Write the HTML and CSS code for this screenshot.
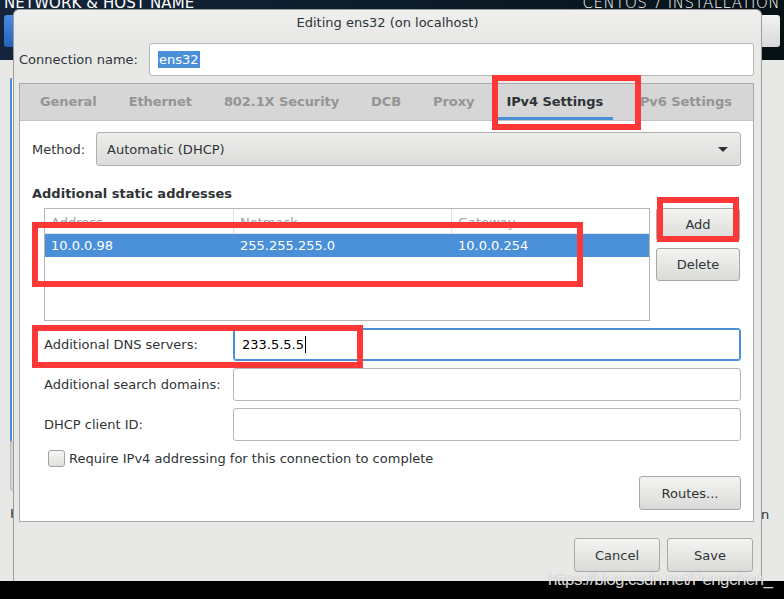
FILE: index.html
```html
<!DOCTYPE html>
<html lang="en">
<head>
    <meta charset="UTF-8">
    <title>Editing ens32 (on localhost)</title>
    <link rel="stylesheet" href="styles.css">
</head>
<body>
    <div class="topbar">
        <div class="hdr hdr-left">
            <div class="hdr-title">NETWORK &amp; HOST NAME</div>
            <div class="done-btn"></div>
        </div>
        <div class="hdr hdr-right">
            <div class="hdr-title light">CENTOS 7 INSTALLATION</div>
            <div class="help-btn"></div>
        </div>
    </div>
    <div class="main">
        <div class="side-panel">
            <div class="side-list"></div>
            <div class="side-scroll"></div>
            <div class="side-h">H</div>
        </div>
        <div class="side-n">n</div>
    </div>
    <div class="bottombar"></div>

    <div class="dialog">
        <div class="titlebar">Editing ens32 (on localhost)</div>
        <div class="dialog-body">
            <div class="conn-row">
                <label class="conn-label">Connection name:</label>
                <div class="entry conn-entry"><span class="sel">ens32</span></div>
            </div>

            <div class="notebook">
                <div class="tabs">
                    <div class="tab">General</div>
                    <div class="tab">Ethernet</div>
                    <div class="tab">802.1X Security</div>
                    <div class="tab">DCB</div>
                    <div class="tab">Proxy</div>
                    <div class="tab active">IPv4 Settings</div>
                    <div class="tab">IPv6 Settings</div>
                </div>
                <div class="page">
                    <div class="method-row">
                        <label class="method-label">Method:</label>
                        <div class="combo">
                            <span>Automatic (DHCP)</span>
                            <span class="arrow"></span>
                        </div>
                    </div>

                    <div class="section-title">Additional static addresses</div>

                    <div class="addr-row">
                        <div class="addr-table">
                            <div class="trow thead">
                                <div class="cell c1">Address</div>
                                <div class="cell c2">Netmask</div>
                                <div class="cell c3">Gateway</div>
                            </div>
                            <div class="trow selected">
                                <div class="cell c1">10.0.0.98</div>
                                <div class="cell c2">255.255.255.0</div>
                                <div class="cell c3">10.0.0.254</div>
                            </div>
                        </div>
                        <div class="addr-buttons">
                            <button class="btn">Add</button>
                            <button class="btn">Delete</button>
                        </div>
                    </div>

                    <div class="form-grid">
                        <label>Additional DNS servers:</label>
                        <div class="entry focus">233.5.5.5<span class="caret"></span></div>
                        <label>Additional search domains:</label>
                        <div class="entry"></div>
                        <label>DHCP client ID:</label>
                        <div class="entry"></div>
                    </div>

                    <div class="check-row">
                        <span class="checkbox"></span>
                        <span>Require IPv4 addressing for this connection to complete</span>
                    </div>

                    <div class="routes-row">
                        <button class="btn routes">Routes...</button>
                    </div>
                </div>
            </div>

            <div class="actions">
                <button class="btn action">Cancel</button>
                <button class="btn action">Save</button>
            </div>
        </div>
    </div>

    <!-- annotation marks drawn over the screenshot -->
    <div class="mark mark-tab"></div>
    <div class="mark mark-row"></div>
    <div class="mark mark-add"></div>
    <div class="mark mark-dns"></div>

    <div class="watermark">https://blog.csdn.net/Pengchen_</div>
</body>
</html>
```

FILE: styles.css
```css
* {
    box-sizing: border-box;
}

body {
    margin: 0;
    width: 784px;
    height: 599px;
    overflow: hidden;
    position: relative;
    display: flex;
    flex-direction: column;
    font-family: 'DejaVu Sans', sans-serif;
    font-size: 13px;
    color: #2e3436;
    background-color: #e8e8e7;
}

/* backdrop: the installer screen behind the dialog */
.topbar {
    height: 60px;
    display: flex;
    justify-content: space-between;
    background: linear-gradient(to right, #14253b, #0b1a26 60%, #061114);
    color: white;
}

.hdr {
    display: flex;
    flex-direction: column;
}

.hdr-left {
    padding-left: 4px;
}

.hdr-right {
    align-items: flex-end;
    padding-right: 4px;
}

.hdr-title {
    font-size: 15px;
    line-height: 15px;
    margin-top: -4px;
    letter-spacing: 0.1px;
}

.hdr-title.light {
    font-weight: 300;
    letter-spacing: 0.5px;
}

.done-btn {
    margin-top: 4px;
    width: 60px;
    height: 32px;
    border-radius: 3px;
    background: linear-gradient(#4a8be0, #2463b8);
}

.help-btn {
    margin-top: 4px;
    width: 60px;
    height: 32px;
    border-radius: 3px;
    background: linear-gradient(#f2f2f2, #d8d8d8);
}

.main {
    flex: 1;
    position: relative;
}

.side-panel {
    position: absolute;
    left: 10px;
    top: 18px;
    width: 10px;
    height: 420px;
}

.side-list {
    height: 370px;
    background: white;
    border-left: 2px solid #4a90d9;
    border-top: 1px solid #bbb;
}

.side-scroll {
    width: 4px;
    height: 50px;
    margin-top: -7px;
    border-radius: 0 0 0 3px;
    background: #d4d4d4;
    border: 1px solid #bbb;
}

.side-h {
    margin-top: 15px;
    font-size: 13px;
}

.side-n {
    position: absolute;
    left: 761px;
    top: 447px;
    font-size: 13px;
}

.bottombar {
    height: 18px;
    background: black;
}

/* dialog window */
.dialog {
    position: absolute;
    left: 13px;
    top: 9px;
    width: 749px;
    height: 572px;
    border: 1px solid #9c9c9c;
    border-bottom: none;
    border-radius: 6px 6px 0 0;
    background: #e8e8e7;
    display: flex;
    flex-direction: column;
}

.titlebar {
    height: 27px;
    line-height: 26px;
    text-align: center;
    border-radius: 6px 6px 0 0;
    background: linear-gradient(#efefee, #e8e8e7);
}

.dialog-body {
    padding: 6px 7px 0 5px;
    flex: 1;
    display: flex;
    flex-direction: column;
}

.conn-row {
    display: flex;
    align-items: center;
    height: 33px;
}

.conn-label {
    width: 130px;
}

.entry {
    height: 32px;
    background: white;
    border: 1px solid #b6b6b3;
    border-radius: 3px;
    display: flex;
    align-items: center;
    padding-left: 8px;
    color: black;
}

.conn-entry {
    flex: 1;
    height: 33px;
}

.sel {
    background: #4a90d9;
    color: white;
    padding: 0 1px;
    line-height: 17px;
}

.entry.focus {
    border-color: #4a90d9;
    box-shadow: inset 0 0 0 1px #4a90d9;
}

.caret {
    display: inline-block;
    width: 1px;
    height: 17px;
    background: black;
    margin-left: 1px;
}

/* notebook */
.notebook {
    margin-top: 7px;
    border: 1px solid #aaaaaa;
}

.tabs {
    height: 37px;
    display: flex;
    padding-left: 4px;
    background: #d6d6d6;
    border-bottom: 1px solid #c4c4c4;
    overflow: hidden;
}

.tab {
    margin: 0 6px;
    padding: 0 10px;
    line-height: 34px;
    font-weight: bold;
    letter-spacing: -0.08px;
    color: #939595;
    white-space: nowrap;
    border-bottom: 3px solid transparent;
    padding-top: 1px;
}

.tab.active {
    color: #2e3436;
    border-bottom-color: #4a90d9;
}

.page {
    background: white;
    height: 400px;
    padding: 11px 12px 0 12px;
}

.method-row {
    display: flex;
    align-items: center;
    height: 34px;
}

.method-label {
    width: 64px;
}

.combo {
    flex: 1;
    height: 34px;
    display: flex;
    align-items: center;
    justify-content: space-between;
    padding: 0 12px 0 10px;
    border: 1px solid #b0b0ae;
    border-radius: 3px;
    background: linear-gradient(#ededec, #dcdcda);
}

.arrow {
    width: 0;
    height: 0;
    border-left: 5px solid transparent;
    border-right: 5px solid transparent;
    border-top: 5px solid #2e3436;
}

.section-title {
    margin-top: 19px;
    line-height: 17px;
    font-weight: bold;
}

.addr-row {
    margin-top: 6px;
    padding-left: 12px;
    display: flex;
    gap: 6px;
}

.addr-table {
    width: 606px;
    height: 113px;
    border: 1px solid #b6b6b3;
}

.trow {
    display: flex;
}

.thead {
    height: 25px;
    border-bottom: 1px solid #e4e4e4;
    color: #a0a0a0;
}

.thead .cell {
    line-height: 24px;
    padding-top: 2px;
}

.thead .c1,
.thead .c2 {
    border-right: 1px solid #e0e0e0;
}

.cell {
    padding-left: 6px;
    white-space: nowrap;
}

.c1 { width: 189px; }
.c2 { width: 218px; }
.c3 { flex: 1; }

.selected {
    height: 23px;
    line-height: 23px;
    background: #4a90d9;
    color: white;
}

.addr-buttons {
    display: flex;
    flex-direction: column;
    gap: 7px;
    width: 84px;
}

.btn {
    height: 33px;
    font-family: 'DejaVu Sans', sans-serif;
    font-size: 13px;
    color: #2e3436;
    border: 1px solid #a8a8a6;
    border-radius: 3px;
    background: linear-gradient(#f4f4f3, #dadad8);
    padding: 0;
}

.form-grid {
    margin-top: 7px;
    padding-left: 12px;
    display: grid;
    grid-template-columns: 189px 1fr;
    grid-auto-rows: 33px;
    row-gap: 7px;
    align-items: center;
}

.form-grid .entry {
    height: 33px;
}

.check-row {
    margin-top: 9px;
    padding-left: 16px;
    display: flex;
    align-items: center;
    gap: 4px;
    height: 17px;
}

.checkbox {
    width: 17px;
    height: 17px;
    border: 1px solid #a0a09e;
    border-radius: 3px;
    background: linear-gradient(#f4f4f3, #e0e0de);
}

.routes-row {
    margin-top: 9px;
    display: flex;
    justify-content: flex-end;
}

.routes {
    width: 102px;
    height: 34px;
}

.actions {
    display: flex;
    justify-content: flex-end;
    gap: 7px;
    padding-top: 16px;
    padding-right: 1px;
}

.action {
    width: 86px;
    height: 34px;
}

/* red annotation boxes */
.mark {
    position: absolute;
    border: 6px solid #fe3737;
}

.mark-tab {
    left: 492px;
    top: 75px;
    width: 149px;
    height: 55px;
}

.mark-row {
    left: 32px;
    top: 222px;
    width: 551px;
    height: 65px;
}

.mark-add {
    left: 657px;
    top: 197px;
    width: 82px;
    height: 45px;
}

.mark-dns {
    left: 32px;
    top: 325px;
    width: 331px;
    height: 43px;
}

.watermark {
    position: absolute;
    left: 548px;
    top: 570px;
    font-family: 'Liberation Sans', Arial, sans-serif;
    font-size: 17px;
    letter-spacing: -0.6px;
    color: rgba(255, 255, 255, 0.85);
    text-shadow: 0 0 1px rgba(0, 0, 0, 0.4);
}
```
